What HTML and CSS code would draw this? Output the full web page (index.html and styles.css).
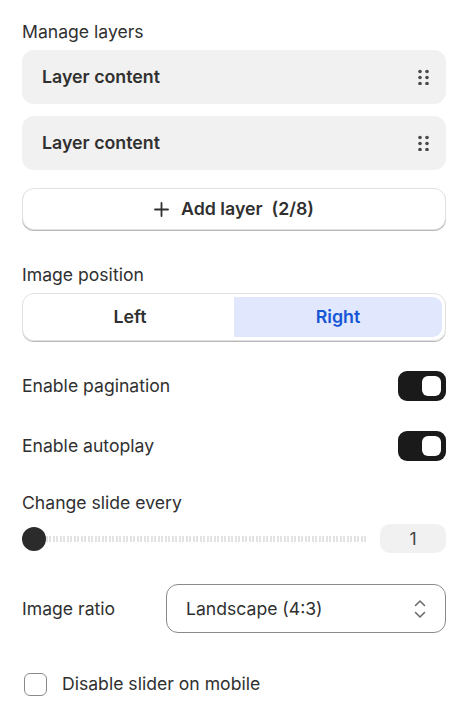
FILE: index.html
```html
<!DOCTYPE html>
<html lang="en">

<head>
    <meta charset="UTF-8">
    <meta name="viewport" content="width=device-width, initial-scale=1.0">
    <title>Slideshow settings</title>
    <link rel="stylesheet" href="styles.css">
</head>

<body>
    <div class="panel">
        <section class="field layers">
            <div class="field-label">Manage layers</div>
            <ul class="layer-list">
                <li class="layer">
                    <span class="layer-name">Layer content</span>
                    <span class="handle">
                        <svg width="11" height="16" viewBox="0 0 11 16">
                            <circle cx="2" cy="2.5" r="1.8" />
                            <circle cx="9" cy="2.5" r="1.8" />
                            <circle cx="2" cy="8.5" r="1.8" />
                            <circle cx="9" cy="8.5" r="1.8" />
                            <circle cx="2" cy="14.5" r="1.8" />
                            <circle cx="9" cy="14.5" r="1.8" />
                        </svg>
                    </span>
                </li>
                <li class="layer">
                    <span class="layer-name">Layer content</span>
                    <span class="handle">
                        <svg width="11" height="16" viewBox="0 0 11 16">
                            <circle cx="2" cy="2.5" r="1.8" />
                            <circle cx="9" cy="2.5" r="1.8" />
                            <circle cx="2" cy="8.5" r="1.8" />
                            <circle cx="9" cy="8.5" r="1.8" />
                            <circle cx="2" cy="14.5" r="1.8" />
                            <circle cx="9" cy="14.5" r="1.8" />
                        </svg>
                    </span>
                </li>
            </ul>
            <button type="button" class="add-layer">
                <svg width="15" height="15" viewBox="0 0 15 15">
                    <path d="M7.5 1v13M1 7.5h13" stroke="currentColor" stroke-width="1.8" stroke-linecap="round" />
                </svg>
                <span>Add layer&nbsp; (2/8)</span>
            </button>
        </section>

        <section class="field position">
            <div class="field-label">Image position</div>
            <div class="segmented">
                <button type="button" class="segment">Left</button>
                <button type="button" class="segment active">Right</button>
            </div>
        </section>

        <div class="toggle-row pagination">
            <span>Enable pagination</span>
            <span class="toggle on"><span class="knob"></span></span>
        </div>

        <div class="toggle-row autoplay">
            <span>Enable autoplay</span>
            <span class="toggle on"><span class="knob"></span></span>
        </div>

        <section class="field interval">
            <div class="field-label">Change slide every</div>
            <div class="slider-row">
                <div class="slider">
                    <span class="thumb"></span>
                    <span class="track"></span>
                </div>
                <div class="slider-value">1</div>
            </div>
        </section>

        <div class="select-row">
            <span class="select-label">Image ratio</span>
            <div class="select">
                <span>Landscape (4:3)</span>
                <svg width="12" height="20" viewBox="0 0 12 20">
                    <path d="M1.5 6.5L6 2l4.5 4.5M1.5 13.5L6 18l4.5-4.5" fill="none" stroke="currentColor" stroke-width="1.6" stroke-linecap="round" stroke-linejoin="round" />
                </svg>
            </div>
        </div>

        <label class="check-row">
            <span class="checkbox"></span>
            <span>Disable slider on mobile</span>
        </label>
    </div>
</body>

</html>
```

FILE: styles.css
```css
* {
    box-sizing: border-box;
}

body {
    margin: 0;
    background: #fff;
    font-family: Inter, "Noto Sans", sans-serif;
    font-size: 17.6px;
    line-height: 24px;
    color: #303030;
}

.panel {
    padding: 20px 30px 0 22px;
}

.field-label {
    margin-bottom: 6px;
}

/* layers */
.layer-list {
    list-style: none;
    margin: 0;
    padding: 0;
    display: flex;
    flex-direction: column;
    gap: 12px;
}

.layer {
    height: 54px;
    display: flex;
    align-items: center;
    justify-content: space-between;
    padding: 0 17px 0 20px;
    background: #f1f1f1;
    border-radius: 12px;
}

.layer-name {
    font-weight: 600;
    font-size: 17.8px;
}

.handle {
    display: flex;
    fill: #4a4a4a;
}

.add-layer {
    width: 100%;
    height: 42px;
    margin-top: 18px;
    display: flex;
    align-items: center;
    justify-content: center;
    gap: 12px;
    background: #fff;
    border: 1px solid #e1e1e1;
    border-radius: 12px;
    box-shadow: 0 1px 0 #b8b8b8;
    font: inherit;
    font-size: 17.8px;
    font-weight: 600;
    color: #303030;
}

/* image position */
.position {
    margin-top: 33px;
}

.segmented {
    height: 48px;
    display: flex;
    padding: 3px;
    border: 1px solid #e1e1e1;
    border-radius: 12px;
    box-shadow: 0 1px 0 #b8b8b8;
}

.segment {
    flex: 1;
    border: 0;
    background: transparent;
    font: inherit;
    font-size: 17.8px;
    font-weight: 600;
    color: #303030;
}

.segment.active {
    background: #e1e7fc;
    color: #1656d6;
    border-radius: 0 9px 9px 0;
}

/* toggles */
.toggle-row {
    display: flex;
    align-items: center;
    justify-content: space-between;
    margin-top: 30px;
}

.toggle {
    width: 48px;
    height: 30px;
    padding: 5px 5px 5px 0;
    display: flex;
    justify-content: flex-end;
    background: #1a1a1a;
    border-radius: 9px;
}

.knob {
    width: 19px;
    height: 20px;
    background: #fff;
    border-radius: 6px;
}

/* interval slider */
.interval {
    margin-top: 30px;
}

.interval .field-label {
    margin-bottom: 9px;
}

.slider-row {
    display: flex;
    align-items: center;
    gap: 12px;
}

.slider {
    flex: 1;
    display: flex;
    align-items: center;
}

.thumb {
    width: 24px;
    height: 24px;
    flex: none;
    border-radius: 50%;
    background: #2b2b2b;
}

.track {
    flex: 1;
    height: 6px;
    border-radius: 0 3px 3px 0;
    background: repeating-linear-gradient(90deg, #e3e3e3 0 2px, transparent 2px 3.5px);
}

.slider-value {
    width: 66px;
    height: 29px;
    display: flex;
    align-items: center;
    justify-content: center;
    background: #f1f1f1;
    border-radius: 10px;
    color: #444;
}

/* ratio select */
.select-row {
    display: flex;
    align-items: center;
    margin-top: 31px;
}

.select-label {
    width: 144px;
}

.select {
    flex: 1;
    height: 49px;
    display: flex;
    align-items: center;
    justify-content: space-between;
    padding: 0 19px 0 19px;
    border: 1px solid #8a8a8a;
    border-radius: 12px;
    color: #6b6b6b;
}

.select span {
    color: #303030;
}

/* mobile checkbox */
.check-row {
    display: flex;
    align-items: center;
    gap: 15px;
    margin-top: 39px;
    padding-left: 2px;
}

.checkbox {
    width: 23px;
    height: 23px;
    border: 1px solid #8a8a8a;
    border-radius: 6px;
}
```
